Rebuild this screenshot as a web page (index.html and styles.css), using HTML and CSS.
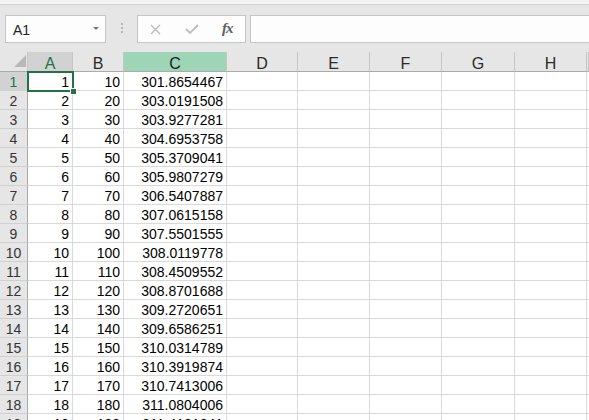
FILE: index.html
```html
<!DOCTYPE html>
<html>
<head>
<meta charset="utf-8">
<link rel="stylesheet" href="styles.css">
</head>
<body>
<div class="top"></div>
<div class="fbar">
  <div class="namebox"><span>A1</span><span class="caret"></span></div>
  <div class="sep"><i></i><i></i><i></i></div>
  <div class="fbtns">
    <span class="slot"><svg width="11" height="11" viewBox="0 0 11 11"><path d="M1 1L10 10M10 1L1 10" stroke="#bdbdbd" stroke-width="1.4" fill="none"/></svg></span>
    <span class="slot"><svg width="14" height="10" viewBox="0 0 14 10"><path d="M1 5L5 9L13 1" stroke="#bdbdbd" stroke-width="1.8" fill="none"/></svg></span>
    <span class="slot fx">fx</span>
  </div>
  <div class="finput"></div>
</div>
<div class="sheet">
  <div class="hrow">
    <div class="corner"><svg width="12" height="12" viewBox="0 0 12 12"><polygon points="12,0 12,12 0,12" fill="#b9b9b9"/></svg></div>
    <div class="ch sel">A</div><div class="ch">B</div><div class="ch hl">C</div><div class="ch">D</div><div class="ch">E</div><div class="ch">F</div><div class="ch">G</div><div class="ch">H</div><div class="ch"></div>
  </div>
  <div class="row"><div class="rh sel">1</div><div class="c a1">1<div class="selbox"><span class="handle"></span></div></div><div class="c">10</div><div class="c">301.8654467</div><div class="c"></div><div class="c"></div><div class="c"></div><div class="c"></div><div class="c"></div><div class="c"></div></div>
  <div class="row"><div class="rh">2</div><div class="c">2</div><div class="c">20</div><div class="c">303.0191508</div><div class="c"></div><div class="c"></div><div class="c"></div><div class="c"></div><div class="c"></div><div class="c"></div></div>
  <div class="row"><div class="rh">3</div><div class="c">3</div><div class="c">30</div><div class="c">303.9277281</div><div class="c"></div><div class="c"></div><div class="c"></div><div class="c"></div><div class="c"></div><div class="c"></div></div>
  <div class="row"><div class="rh">4</div><div class="c">4</div><div class="c">40</div><div class="c">304.6953758</div><div class="c"></div><div class="c"></div><div class="c"></div><div class="c"></div><div class="c"></div><div class="c"></div></div>
  <div class="row"><div class="rh">5</div><div class="c">5</div><div class="c">50</div><div class="c">305.3709041</div><div class="c"></div><div class="c"></div><div class="c"></div><div class="c"></div><div class="c"></div><div class="c"></div></div>
  <div class="row"><div class="rh">6</div><div class="c">6</div><div class="c">60</div><div class="c">305.9807279</div><div class="c"></div><div class="c"></div><div class="c"></div><div class="c"></div><div class="c"></div><div class="c"></div></div>
  <div class="row"><div class="rh">7</div><div class="c">7</div><div class="c">70</div><div class="c">306.5407887</div><div class="c"></div><div class="c"></div><div class="c"></div><div class="c"></div><div class="c"></div><div class="c"></div></div>
  <div class="row"><div class="rh">8</div><div class="c">8</div><div class="c">80</div><div class="c">307.0615158</div><div class="c"></div><div class="c"></div><div class="c"></div><div class="c"></div><div class="c"></div><div class="c"></div></div>
  <div class="row"><div class="rh">9</div><div class="c">9</div><div class="c">90</div><div class="c">307.5501555</div><div class="c"></div><div class="c"></div><div class="c"></div><div class="c"></div><div class="c"></div><div class="c"></div></div>
  <div class="row"><div class="rh">10</div><div class="c">10</div><div class="c">100</div><div class="c">308.0119778</div><div class="c"></div><div class="c"></div><div class="c"></div><div class="c"></div><div class="c"></div><div class="c"></div></div>
  <div class="row"><div class="rh">11</div><div class="c">11</div><div class="c">110</div><div class="c">308.4509552</div><div class="c"></div><div class="c"></div><div class="c"></div><div class="c"></div><div class="c"></div><div class="c"></div></div>
  <div class="row"><div class="rh">12</div><div class="c">12</div><div class="c">120</div><div class="c">308.8701688</div><div class="c"></div><div class="c"></div><div class="c"></div><div class="c"></div><div class="c"></div><div class="c"></div></div>
  <div class="row"><div class="rh">13</div><div class="c">13</div><div class="c">130</div><div class="c">309.2720651</div><div class="c"></div><div class="c"></div><div class="c"></div><div class="c"></div><div class="c"></div><div class="c"></div></div>
  <div class="row"><div class="rh">14</div><div class="c">14</div><div class="c">140</div><div class="c">309.6586251</div><div class="c"></div><div class="c"></div><div class="c"></div><div class="c"></div><div class="c"></div><div class="c"></div></div>
  <div class="row"><div class="rh">15</div><div class="c">15</div><div class="c">150</div><div class="c">310.0314789</div><div class="c"></div><div class="c"></div><div class="c"></div><div class="c"></div><div class="c"></div><div class="c"></div></div>
  <div class="row"><div class="rh">16</div><div class="c">16</div><div class="c">160</div><div class="c">310.3919874</div><div class="c"></div><div class="c"></div><div class="c"></div><div class="c"></div><div class="c"></div><div class="c"></div></div>
  <div class="row"><div class="rh">17</div><div class="c">17</div><div class="c">170</div><div class="c">310.7413006</div><div class="c"></div><div class="c"></div><div class="c"></div><div class="c"></div><div class="c"></div><div class="c"></div></div>
  <div class="row"><div class="rh">18</div><div class="c">18</div><div class="c">180</div><div class="c">311.0804006</div><div class="c"></div><div class="c"></div><div class="c"></div><div class="c"></div><div class="c"></div><div class="c"></div></div>
  <div class="row"><div class="rh">19</div><div class="c">19</div><div class="c">190</div><div class="c">311.4101041</div><div class="c"></div><div class="c"></div><div class="c"></div><div class="c"></div><div class="c"></div><div class="c"></div></div>
</div>
</body>
</html>
```
FILE: styles.css
```css
html, body {
  margin: 0;
  padding: 0;
}
body {
  width: 589px;
  height: 420px;
  overflow: hidden;
  background: #ffffff;
  font-family: "Liberation Sans", Arial, sans-serif;
}
.top {
  height: 4px;
  background: #f3f3f3;
  border-bottom: 1px solid #d4d4d4;
}
.fbar {
  height: 47px;
  box-sizing: border-box;
  padding-top: 10px;
  background: #e6e6e6;
  display: flex;
  align-items: flex-start;
}
.namebox {
  margin-left: 5px;
  width: 101px;
  height: 28px;
  box-sizing: border-box;
  border: 1px solid #c6c6c6;
  background: #fdfdfd;
  display: flex;
  align-items: center;
  justify-content: space-between;
  padding: 1px 6px 0 7px;
  font-size: 14px;
  color: #222;
}
.caret {
  width: 0;
  height: 0;
  margin-bottom: 2px;
  border-left: 3px solid transparent;
  border-right: 3px solid transparent;
  border-top: 3px solid #777;
}
.sep {
  width: 31px;
  padding-top: 8px;
  display: flex;
  flex-direction: column;
  align-items: center;
  gap: 2px;
}
.sep i {
  display: block;
  width: 2px;
  height: 2px;
  background: #b5b5b5;
}
.fbtns {
  width: 109px;
  height: 28px;
  box-sizing: border-box;
  border: 1px solid #c6c6c6;
  background: #fdfdfd;
  display: flex;
  align-items: center;
}
.slot {
  width: 36px;
  display: flex;
  justify-content: center;
  align-items: center;
}
.fx {
  font-family: "Liberation Serif", "Times New Roman", serif;
  font-style: italic;
  font-weight: bold;
  font-size: 15px;
  color: #606060;
  letter-spacing: -1px;
  padding-bottom: 2px;
}
.finput {
  flex: 1;
  margin-left: 4px;
  height: 28px;
  box-sizing: border-box;
  border: 1px solid #c6c6c6;
  border-right: none;
  background: #fdfdfd;
}
.hrow, .row {
  display: grid;
  grid-template-columns: 28px 45px 51px 103px 71px 72px 72px 73px 72px 2px;
}
.hrow {
  height: 20px;
}
.row {
  height: 19px;
}
.corner {
  background: #e6e6e6;
  border-bottom: 1px solid #ababab;
  border-right: 1px solid #c6c6c6;
  box-sizing: border-box;
  display: flex;
  align-items: flex-end;
  justify-content: flex-end;
  padding: 0 1px 4px 0;
}
.ch {
  box-sizing: border-box;
  height: 20px;
  background: #e6e6e6;
  border-right: 1px solid #c6c6c6;
  border-bottom: 1px solid #ababab;
  text-align: center;
  font-size: 16px;
  line-height: 20px;
  padding-top: 2px;
  color: #2a2a2a;
  overflow: hidden;
}
.ch.sel {
  background: #d2d2d2;
  color: #217346;
}
.ch.hl {
  background: #9fd5b7;
  color: #1a1a1a;
}
.rh {
  box-sizing: border-box;
  height: 19px;
  background: #e6e6e6;
  border-right: 1px solid #ababab;
  border-bottom: 1px solid #d0d0d0;
  text-align: center;
  font-size: 14px;
  line-height: 20px;
  color: #333;
  overflow: hidden;
}
.rh.sel {
  background: #d2d2d2;
  color: #217346;
}
.c {
  box-sizing: border-box;
  height: 19px;
  border-right: 1px solid #d9d9d9;
  border-bottom: 1px solid #d9d9d9;
  text-align: right;
  padding-right: 3px;
  font-size: 14px;
  line-height: 20px;
  color: #000;
  white-space: nowrap;
}
.a1 {
  position: relative;
}
.selbox {
  position: absolute;
  left: -1px;
  top: -1px;
  width: 47px;
  height: 21px;
  box-sizing: border-box;
  border: 2px solid #217346;
}
.handle {
  position: absolute;
  left: 41px;
  top: 15px;
  width: 5px;
  height: 5px;
  background: #217346;
  border: 1px solid #ffffff;
}
```
